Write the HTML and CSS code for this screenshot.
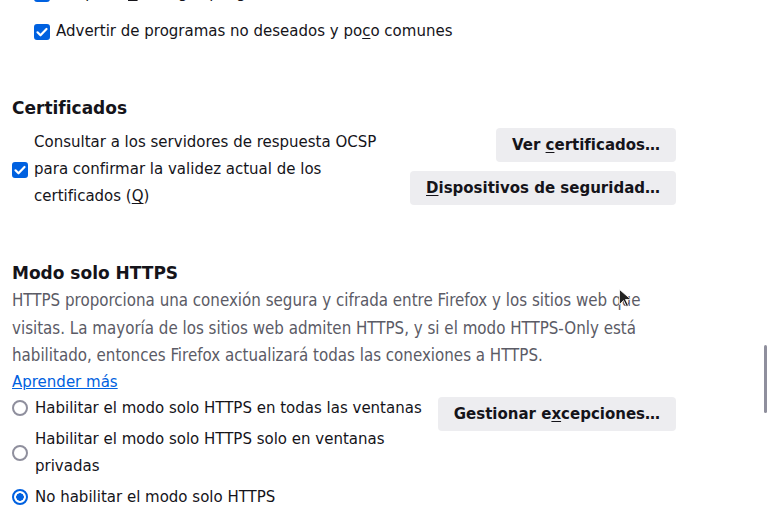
FILE: index.html
```html
<!DOCTYPE html>
<html lang="es">
<head>
    <meta charset="UTF-8">
    <title>Privacidad y seguridad</title>
    <link rel="stylesheet" href="styles.css">
</head>
<body>

<div class="pane">

    <div class="check-row sub first">
        <span class="checkbox checked"><svg viewBox="0 0 16 16"><path d="M3.5 8.3l3 3L12.5 5" /></svg></span>
        <span>Bloquear <u>d</u>escargas peligrosas</span>
    </div>
    <div class="check-row sub">
        <span class="checkbox checked"><svg viewBox="0 0 16 16"><path d="M3.5 8.3l3 3L12.5 5" /></svg></span>
        <span>Advertir de programas no deseados y po<u>c</u>o comunes</span>
    </div>

    <h2 class="section-title cert-title">Certificados</h2>
    <div class="split">
        <div class="check-row ocsp">
            <span class="checkbox checked"><svg viewBox="0 0 16 16"><path d="M3.5 8.3l3 3L12.5 5" /></svg></span>
            <span class="label">Consultar a los servidores de respuesta OCSP para confirmar la validez actual de los certificados (<u>Q</u>)</span>
        </div>
        <div class="buttons">
            <button>Ver <u>c</u>ertificados…</button>
            <button><u>D</u>ispositivos de seguridad…</button>
        </div>
    </div>

    <h2 class="section-title https-title">Modo solo HTTPS</h2>
    <p class="description">HTTPS proporciona una conexión segura y cifrada entre Firefox y los sitios web que visitas. La mayoría de los sitios web admiten HTTPS, y si el modo HTTPS-Only está habilitado, entonces Firefox actualizará todas las conexiones a HTTPS.</p>
    <a class="learn-more" href="#">Aprender más</a>

    <div class="split https">
        <div class="radiogroup">
            <div class="radio-row">
                <span class="radio"></span>
                <span class="label">Habilitar el modo solo HTTPS en todas las ventanas</span>
            </div>
            <div class="radio-row">
                <span class="radio"></span>
                <span class="label">Habilitar el modo solo HTTPS solo en ventanas privadas</span>
            </div>
            <div class="radio-row">
                <span class="radio selected"></span>
                <span class="label">No habilitar el modo solo HTTPS</span>
            </div>
        </div>
        <div class="buttons">
            <button>Gestionar e<u>x</u>cepciones…</button>
        </div>
    </div>

</div>

<div class="scrollbar"></div>
<svg class="cursor" viewBox="0 0 12 18"><path d="M0.5 0.5v15l4-4 3 6 2-1-3-6h5.5z" /></svg>

</body>
</html>
```

FILE: styles.css
```css
html, body {
    margin: 0;
    height: 505px;
    overflow: hidden;
    background: #fff;
}
body {
    font-family: "DejaVu Sans", sans-serif;
    font-size: 15px;
    color: #15141a;
    position: relative;
}
.pane {
    width: 664px;
    padding-left: 12px;
}
u { text-underline-offset: 2px; }

.check-row {
    display: flex;
    align-items: center;
    gap: 6px;
    line-height: 27px;
}
.check-row.sub {
    padding-left: 22px;
    margin-bottom: 11px;
}
.check-row.first { margin-top: -20px; }

.checkbox {
    width: 16px;
    height: 16px;
    flex: none;
    border-radius: 3px;
    box-sizing: border-box;
    border: 2px solid #8f8f9d;
}
.checkbox.checked {
    background: #0061e0;
    border-color: #0061e0;
}
.checkbox svg {
    display: block;
    width: 16px;
    height: 16px;
    margin: -2px;
}
.checkbox path {
    fill: none;
    stroke: #fff;
    stroke-width: 2.2;
    stroke-linecap: round;
    stroke-linejoin: round;
}

.section-title {
    font-size: 17px;
    font-weight: bold;
    line-height: 24px;
    margin: 0;
}
.cert-title { margin-top: 51px; margin-bottom: 9px; }
.https-title { margin-top: 51px; margin-bottom: 2px; }

.split {
    display: flex;
    align-items: flex-start;
    gap: 8px;
}
.split > :first-child { flex: 1; }

.buttons {
    display: flex;
    flex-direction: column;
    align-items: flex-end;
    gap: 9px;
}
.ocsp + .buttons { margin-top: -1px; }
button {
    font-family: "DejaVu Sans", sans-serif;
    font-size: 15px;
    font-weight: bold;
    color: #15141a;
    background: #ededf0;
    border: none;
    border-radius: 4px;
    height: 34px;
    padding: 0 16px;
    margin: 0;
}

.description {
    font-family: "DejaVu Sans Condensed", "DejaVu Sans", sans-serif;
    font-stretch: condensed;
    font-size: 16.8px;
    color: #5b5b66;
    line-height: 27.5px;
    margin: 0;
}
.learn-more {
    display: inline-block;
    color: #0061e0;
    line-height: 24px;
    margin-bottom: 1px;
}

.radiogroup {
    display: flex;
    flex-direction: column;
    gap: 4px;
}
.radio-row {
    display: flex;
    align-items: center;
    gap: 7px;
    line-height: 27px;
}
.radio {
    width: 16px;
    height: 16px;
    flex: none;
    box-sizing: border-box;
    border: 2px solid #8f8f9d;
    border-radius: 50%;
}
.radio.selected {
    border-color: #0061e0;
    background: radial-gradient(circle, #0061e0 0 3.5px, #fff 4px);
}
.https .buttons { padding-top: 2px; }

.scrollbar {
    position: absolute;
    left: 764px;
    top: 345px;
    width: 3px;
    height: 68px;
    background: #8f8f9d;
    border-radius: 2px;
}
.cursor {
    position: absolute;
    left: 619px;
    top: 289px;
    width: 12px;
    height: 18px;
}
.cursor path {
    fill: #222;
    stroke: #fff;
    stroke-width: 0.8;
}
```
